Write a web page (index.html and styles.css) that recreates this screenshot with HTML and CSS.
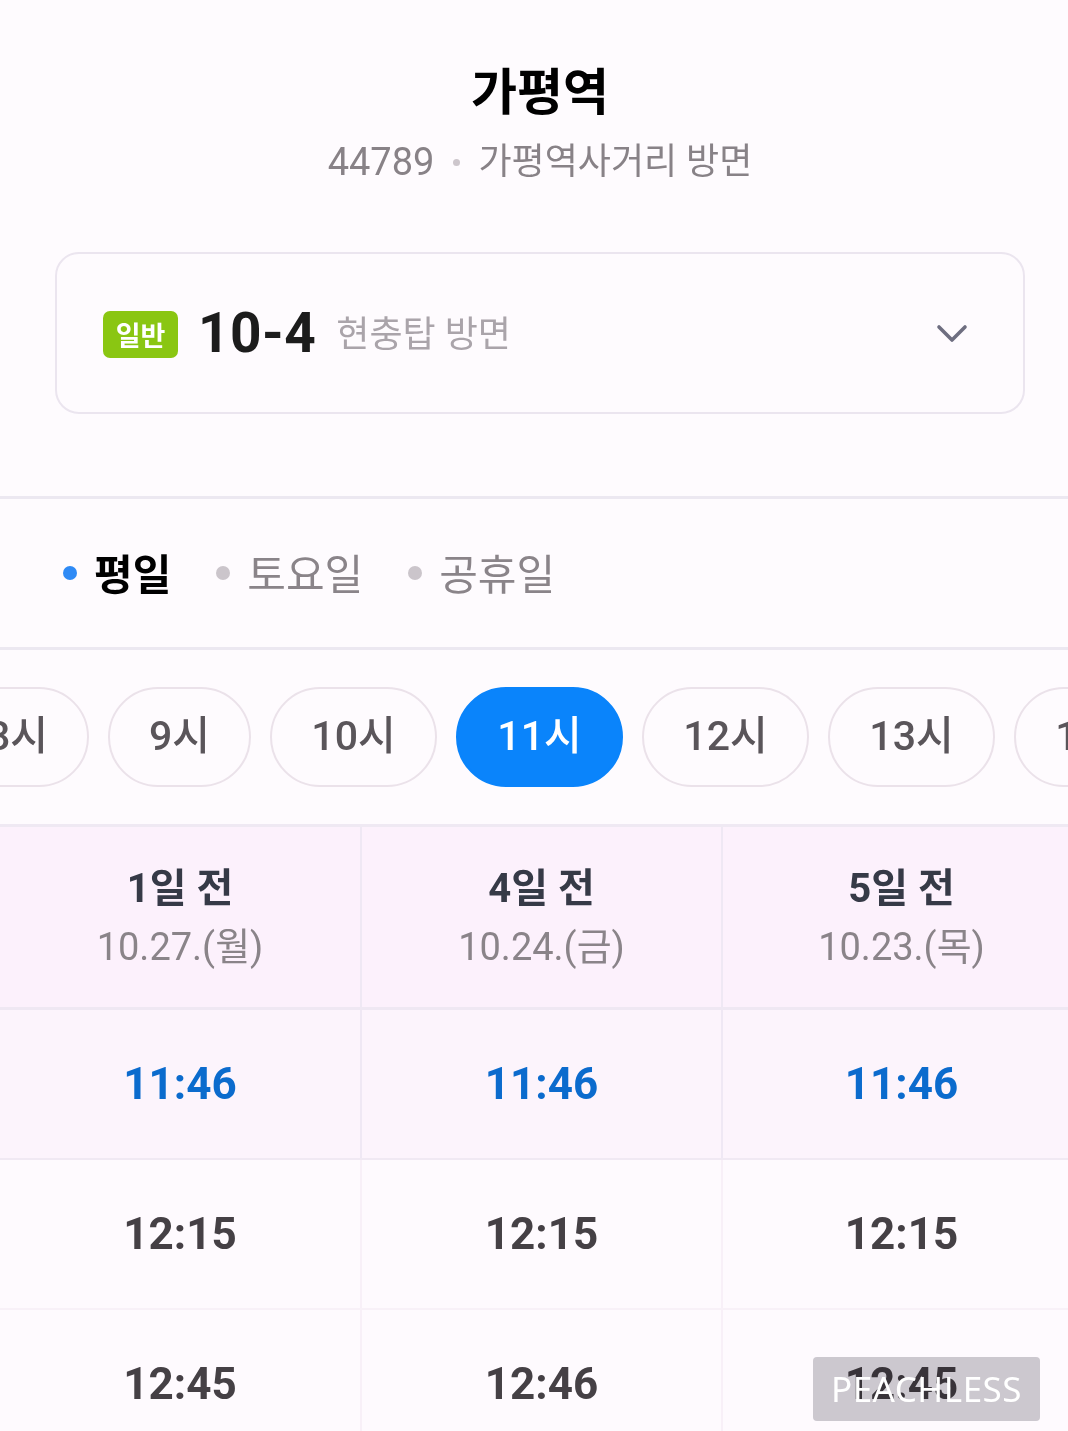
FILE: index.html
```html
<!DOCTYPE html>
<html lang="ko">
<head>
<meta charset="utf-8">
<title>가평역 시간표</title>
<link rel="stylesheet" href="styles.css">
</head>
<body>
<div class="page">
  <header class="station">
    <h1 class="station-name">가평역</h1>
    <p class="station-sub"><span class="num">44789</span><span class="sep"></span><span>가평역사거리 방면</span></p>
  </header>

  <div class="route-card">
    <span class="badge">일반</span>
    <span class="route-no">10-4</span>
    <span class="route-dir">현충탑 방면</span>
    <svg class="chevron" width="32" height="20" viewBox="0 0 32 20"><path d="M3 3 L16 16 L29 3" fill="none" stroke="#6e6e80" stroke-width="3.6" stroke-linecap="round" stroke-linejoin="round"/></svg>
  </div>

  <nav class="day-tabs">
    <div class="tab active"><span class="dot"></span>평일</div>
    <div class="tab"><span class="dot"></span>토요일</div>
    <div class="tab"><span class="dot"></span>공휴일</div>
  </nav>

  <div class="hours">
    <div class="pill one">8시</div>
    <div class="pill one">9시</div>
    <div class="pill">10시</div>
    <div class="pill selected">11시</div>
    <div class="pill">12시</div>
    <div class="pill">13시</div>
    <div class="pill">14시</div>
  </div>

  <div class="table">
    <div class="row head">
      <div class="cell"><div class="ago">1일 전</div><div class="date">10.27.(월)</div></div>
      <div class="cell"><div class="ago">4일 전</div><div class="date">10.24.(금)</div></div>
      <div class="cell"><div class="ago">5일 전</div><div class="date">10.23.(목)</div></div>
    </div>
    <div class="row time first">
      <div class="cell">11:46</div>
      <div class="cell">11:46</div>
      <div class="cell">11:46</div>
    </div>
    <div class="row time">
      <div class="cell">12:15</div>
      <div class="cell">12:15</div>
      <div class="cell">12:15</div>
    </div>
    <div class="row time">
      <div class="cell">12:45</div>
      <div class="cell">12:46</div>
      <div class="cell">12:45</div>
    </div>
  </div>

  <div class="watermark"><span>PEACHLESS</span></div>
</div>
</body>
</html>
```

FILE: styles.css
```css
html, body {
  margin: 0;
  padding: 0;
  overflow: hidden;
  background: #fefbfe;
}

body {
  font-family: "Roboto", "Noto Sans CJK KR", sans-serif;
  color: #111;
}

.page {
  position: relative;
  width: 1080px;
  height: 1431px;
}

.station {
  text-align: center;
  padding-top: 55px;
}

.station-name {
  margin: 0;
  font-family: "Noto Sans CJK KR", sans-serif;
  font-size: 50px;
  line-height: 66px;
  font-weight: 700;
  color: #000;
}

.station-sub {
  margin: 16px 0 0;
  font-size: 36px;
  line-height: 50px;
  color: #888287;
  display: flex;
  justify-content: center;
  align-items: center;
}

.station-sub .num {
  font-size: 38px;
}

.sep {
  width: 7px;
  height: 7px;
  border-radius: 50%;
  background: #cdc6cc;
  margin: 0 18px 0 19px;
}

.route-card {
  margin: 65px 55px 0;
  height: 158px;
  border: 2px solid #ebe5ef;
  border-radius: 24px;
  display: flex;
  align-items: center;
  padding: 0 55px 0 46px;
  background: #fefbfe;
}

.badge {
  background: #8ac612;
  color: #fff;
  font-family: "Noto Sans CJK KR", sans-serif;
  font-weight: 700;
  font-size: 27px;
  line-height: 47px;
  height: 47px;
  width: 75px;
  text-align: center;
  border-radius: 7px;
  margin-top: 2px;
}

.route-no {
  font-size: 55px;
  font-weight: 700;
  color: #1c1c1c;
  margin-left: 20px;
  letter-spacing: 0.5px;
}

.route-dir {
  font-size: 36px;
  color: #aaa4aa;
  margin-left: 20px;
  margin-top: -4px;
}

.chevron {
  margin-left: auto;
  margin-top: 2px;
}

.day-tabs {
  margin-top: 82px;
  border-top: 3px solid #ece8f1;
  border-bottom: 3px solid #ece8f1;
  height: 148px;
  display: flex;
  align-items: center;
  gap: 45px;
  padding-left: 63px;
}

.tab {
  display: flex;
  align-items: center;
  font-size: 42px;
  color: #8a8489;
  font-family: "Noto Sans CJK KR", sans-serif;
  margin-top: -4px;
}

.tab .dot {
  width: 14px;
  height: 14px;
  border-radius: 50%;
  background: #cbc5cb;
  margin-right: 17px;
  margin-top: 4px;
}

.tab.active {
  color: #000;
  font-weight: 700;
}

.tab.active .dot {
  background: #2f8af5;
  margin-right: 17px;
}

.hours {
  margin: 37px 0 37px -54px;
  display: flex;
  gap: 19px;
}

.pill {
  flex: none;
  box-sizing: border-box;
  width: 167px;
  height: 100px;
  padding-bottom: 10px;
  border: 2px solid #ebe2ea;
  border-radius: 50px;
  display: flex;
  align-items: center;
  justify-content: center;
  font-size: 41px;
  font-weight: 500;
  color: #5a555a;
}

.pill.one {
  width: 143px;
}

.pill.selected {
  background: #0a84fb;
  border-color: #0a84fb;
  color: #fff;
}

.table {
  border-top: 3px solid #efe9f3;
}

.row {
  display: grid;
  grid-template-columns: 360px 361px 359px;
}

.cell {
  display: flex;
  flex-direction: column;
  align-items: center;
  justify-content: center;
}

.cell + .cell {
  border-left: 2px solid #efe8f4;
}

.row.head {
  height: 180px;
  background: #fcf1fc;
  border-bottom: 3px solid #efe8f3;
}

.row.head .cell {
  justify-content: flex-start;
  padding-top: 37px;
}

.ago {
  font-size: 40px;
  line-height: 50px;
  font-weight: 700;
  color: #363a47;
}

.date {
  margin-top: 8px;
  font-size: 38px;
  line-height: 50px;
  color: #8a8489;
}

.row.time {
  height: 148px;
  font-size: 44px;
  font-weight: 700;
  color: #454045;
  background: #fefafe;
  border-bottom: 2px solid #f8f1f8;
}

.row.time .cell + .cell {
  border-left-color: #f8f0f8;
}

.row.time.first {
  background: #fcf4fc;
  color: #0b6bcd;
  border-bottom-color: #f0e9f3;
}

.row.time.first .cell + .cell {
  border-left-color: #efe8f4;
}

.watermark {
  position: absolute;
  left: 813px;
  top: 1357px;
  width: 227px;
  height: 64px;
  color: #fff;
  font-family: "Noto Sans", sans-serif;
  font-size: 35px;
  line-height: 64px;
  text-align: center;
  letter-spacing: 0.5px;
}

.watermark::before {
  content: "";
  position: absolute;
  inset: 0;
  background: #cdccd0;
  border-radius: 4px;
  mix-blend-mode: multiply;
}

.watermark span {
  position: relative;
}
```
